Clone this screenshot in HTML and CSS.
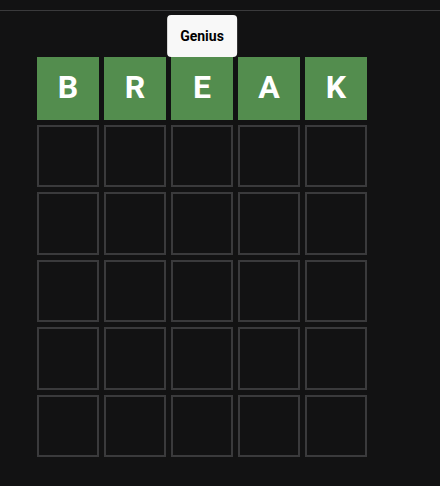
FILE: index.html
```html
<!DOCTYPE html>
<html lang="en">
<head>
    <meta charset="UTF-8">
    <meta name="viewport" content="width=device-width, initial-scale=1.0">
    <title>Wordle</title>
    <link rel="stylesheet" href="styles.css">
</head>
<body>
    <header class="top-bar"></header>

    <main class="game">
        <div class="board">
            <div class="row">
                <div class="tile correct">B</div>
                <div class="tile correct">R</div>
                <div class="tile correct">
                    E
                    <div class="toast">Genius</div>
                </div>
                <div class="tile correct">A</div>
                <div class="tile correct">K</div>
            </div>
            <div class="row">
                <div class="tile"></div><div class="tile"></div><div class="tile"></div><div class="tile"></div><div class="tile"></div>
            </div>
            <div class="row">
                <div class="tile"></div><div class="tile"></div><div class="tile"></div><div class="tile"></div><div class="tile"></div>
            </div>
            <div class="row">
                <div class="tile"></div><div class="tile"></div><div class="tile"></div><div class="tile"></div><div class="tile"></div>
            </div>
            <div class="row">
                <div class="tile"></div><div class="tile"></div><div class="tile"></div><div class="tile"></div><div class="tile"></div>
            </div>
            <div class="row">
                <div class="tile"></div><div class="tile"></div><div class="tile"></div><div class="tile"></div><div class="tile"></div>
            </div>
        </div>
    </main>
</body>
</html>
```

FILE: styles.css
```css
* {
    margin: 0;
    padding: 0;
    box-sizing: border-box;
}

body {
    font-family: Roboto, "Liberation Sans", Arial, sans-serif;
    background: #121213;
    color: white;
    min-height: 100vh;
}

.top-bar {
    height: 11px;
    border-bottom: 1px solid #3a3a3c;
}

.game {
    padding: 46px 0 0 37px;
}

.board {
    width: 330px;
    height: 400px;
    display: grid;
    grid-template-rows: repeat(6, 1fr);
    gap: 5px;
}

.row {
    display: grid;
    grid-template-columns: repeat(5, 1fr);
    gap: 5px;
}

.tile {
    position: relative;
    border: 2px solid #3a3a3c;
    display: flex;
    justify-content: center;
    align-items: center;
    font-size: 32px;
    font-weight: bold;
    padding-bottom: 3px;
}

.tile.correct {
    background-color: #538d4e;
    border: none;
}

.toast {
    position: absolute;
    bottom: 100%;
    left: 50%;
    transform: translateX(-50%);
    background: #f8f8f8;
    color: #000;
    font-size: 14px;
    font-weight: bold;
    padding: 12px 13px;
    border-radius: 4px;
    line-height: 18px;
    white-space: nowrap;
}
```
